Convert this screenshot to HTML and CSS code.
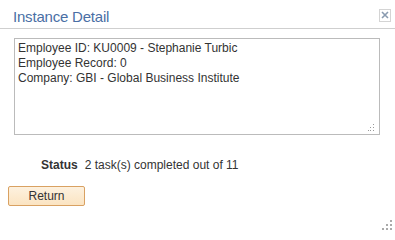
FILE: index.html
```html
<!DOCTYPE html>
<html>
<head>
<meta charset="utf-8">
<link rel="stylesheet" href="styles.css">
</head>
<body>
<div class="dialog">
  <div class="header">
    <div class="title">Instance Detail</div>
    <div class="close" title="Close">
      <svg width="8" height="8" viewBox="0 0 8 8"><path d="M1 1L7 7M7 1L1 7" stroke="#8a9bb0" stroke-width="1.6"/></svg>
    </div>
  </div>
  <div class="body">
    <div class="textbox">
      <div>Employee ID: KU0009 - Stephanie Turbic</div>
      <div>Employee Record: 0</div>
      <div>Company: GBI - Global Business Institute</div>
      <svg class="tgrip" width="7" height="7" viewBox="0 0 7 7">
        <rect x="5" y="0" width="1" height="1" fill="#999"/>
        <rect x="2" y="3" width="1" height="1" fill="#999"/>
        <rect x="5" y="3" width="1" height="1" fill="#999"/>
        <rect x="0" y="6" width="1" height="1" fill="#999"/>
        <rect x="2" y="6" width="1" height="1" fill="#999"/>
        <rect x="5" y="6" width="1" height="1" fill="#999"/>
      </svg>
    </div>
    <div class="status">
      <span class="label">Status</span>
      <span class="value">2 task(s) completed out of 11</span>
    </div>
    <div class="actions">
      <button class="btn">Return</button>
    </div>
  </div>
  <svg class="grip" width="10" height="10" viewBox="0 0 10 10">
    <rect x="8" y="0" width="2" height="2" fill="#aaa"/>
    <rect x="4" y="4" width="2" height="2" fill="#aaa"/>
    <rect x="8" y="4" width="2" height="2" fill="#aaa"/>
    <rect x="0" y="8" width="2" height="2" fill="#aaa"/>
    <rect x="4" y="8" width="2" height="2" fill="#aaa"/>
    <rect x="8" y="8" width="2" height="2" fill="#aaa"/>
  </svg>
</div>
</body>
</html>
```
FILE: styles.css
```css
html, body {
  margin: 0;
  padding: 0;
  background: #fff;
}
.dialog {
  position: relative;
  width: 395px;
  height: 233px;
  font-family: "Liberation Sans", Arial, sans-serif;
  color: #333;
  box-sizing: border-box;
}
.header {
  display: flex;
  align-items: center;
  justify-content: space-between;
  height: 29px;
  border-bottom: 1px solid #cfcfcf;
  padding: 0 4px 0 13px;
  box-sizing: border-box;
}
.title {
  font-size: 15px;
  letter-spacing: -0.2px;
  color: #4a6fa5;
  padding-top: 4px;
}
.close {
  width: 10px;
  height: 11px;
  border: 1px solid #d4d4d4;
  display: flex;
  align-items: center;
  justify-content: center;
  margin-top: 2px;
}
.body {
  padding: 9px 15px 0 14px;
}
.textbox {
  position: relative;
  height: 97px;
  border: 1px solid #bbb;
  box-sizing: border-box;
  padding: 2px 3px;
  font-size: 12px;
  line-height: 15px;
  color: #333;
}
.tgrip {
  position: absolute;
  right: 4px;
  bottom: 3px;
}
.status {
  display: flex;
  gap: 7px;
  margin-top: 23px;
  padding-left: 27px;
  font-size: 12px;
  line-height: 14px;
}
.status .label {
  font-weight: bold;
}
.actions {
  display: flex;
  margin-top: 14px;
  margin-left: -6px;
}
.btn {
  width: 77px;
  height: 20px;
  border: 1px solid #d9a162;
  border-radius: 2px;
  background: linear-gradient(#fdf1df, #fbe4c2);
  font-family: "Liberation Sans", Arial, sans-serif;
  font-size: 12px;
  color: #333;
  padding: 0;
}
.grip {
  position: absolute;
  right: 3px;
  bottom: 3px;
}
```
